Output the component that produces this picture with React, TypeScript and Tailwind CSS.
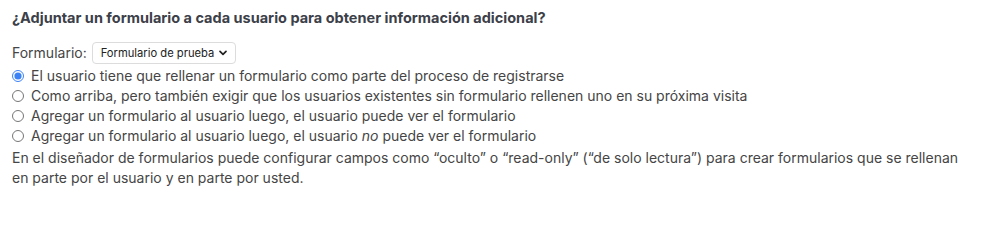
import { useState } from 'react'

const OPTIONS: { id: string; label: React.ReactNode }[] = [
  { id: 'register', label: 'El usuario tiene que rellenar un formulario como parte del proceso de registrarse' },
  { id: 'existing', label: 'Como arriba, pero también exigir que los usuarios existentes sin formulario rellenen uno en su próxima visita' },
  { id: 'later-visible', label: 'Agregar un formulario al usuario luego, el usuario puede ver el formulario' },
  {
    id: 'later-hidden',
    label: (
      <>
        Agregar un formulario al usuario luego, el usuario <em>no</em> puede ver el formulario
      </>
    ),
  },
]

export default function App() {
  const [selected, setSelected] = useState('register')

  return (
    <div className="min-h-[205px] bg-white px-3 pt-2 text-[14px] leading-5 text-[#454545] font-['Inter',sans-serif]">
      <h3 className="text-[14.5px] font-bold leading-5 text-[#3c4048]">
        ¿Adjuntar un formulario a cada usuario para obtener información adicional?
      </h3>

      <div className="mt-[14px] flex items-center gap-[5px]">
        <label htmlFor="form-select">Formulario:</label>
        <div className="relative">
          <select
            id="form-select"
            className="h-[22px] w-[144px] appearance-none rounded border border-[#dcdcdc] bg-white pl-2 pr-[16px] text-[11.2px] leading-4 text-[#222]"
            defaultValue="prueba"
          >
            <option value="prueba">Formulario de prueba</option>
          </select>
          <svg
            className="pointer-events-none absolute right-[9px] top-1/2 -translate-y-1/2"
            width="8"
            height="6"
            viewBox="0 0 8 6"
            fill="none"
          >
            <path d="M1 1.3l3 3 3-3" stroke="#222" strokeWidth="1.7" strokeLinecap="round" strokeLinejoin="round" />
          </svg>
        </div>
      </div>

      <div className="mt-0.5 flex flex-col">
        {OPTIONS.map(opt => (
          <label key={opt.id} className="flex items-center gap-[7px]">
            <input
              type="radio"
              name="attach-form"
              checked={selected === opt.id}
              onChange={() => setSelected(opt.id)}
              className="m-0 h-[12px] w-[12px] accent-[#3b82f6]"
            />
            <span>{opt.label}</span>
          </label>
        ))}
      </div>

      <p className="mt-0.5 max-w-[960px]">
        En el diseñador de formularios puede configurar campos como “oculto” o “read-only” (“de solo lectura”) para crear formularios que se rellenan en parte por el usuario y en parte por usted.
      </p>
    </div>
  )
}
